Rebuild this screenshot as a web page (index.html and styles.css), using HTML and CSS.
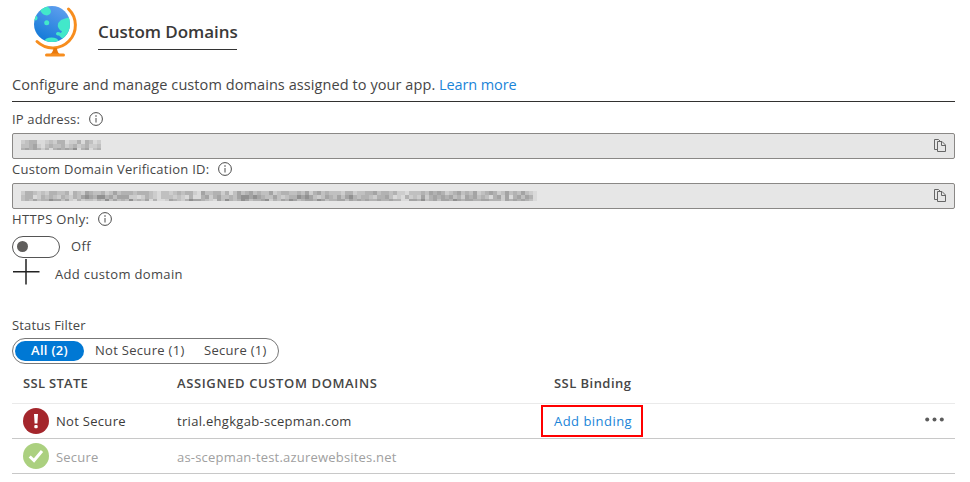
FILE: index.html
```
<!DOCTYPE html>
<html lang="en">
<head>
<meta charset="utf-8">
<title>Custom Domains</title>
<link rel="stylesheet" href="styles.css">
</head>
<body>
<svg class="defs" width="0" height="0">
  <symbol id="info" viewBox="0 0 14 14"><circle cx="7" cy="7" r="6.4" fill="none" stroke="#4a4a4a"/><path d="M7 6v4.5" stroke="#4a4a4a"/><circle cx="7" cy="4" r=".8" fill="#4a4a4a"/></symbol>
  <symbol id="copy" viewBox="0 0 12 14"><path d="M3.5 10.500h-3V.5h4l2 2" fill="none" stroke="#666"/><path d="M3.500 2.500h4.500l3.500 3.500v6.500h-8zM7.500 2.500v4h4" fill="none" stroke="#666"/></symbol>
</svg>
<main class="page">
  <header class="header">
    <svg class="globe" viewBox="0 0 44 54" width="44" height="54">
      <defs>
        <linearGradient id="sea" x1="0.7" y1="0" x2="0.2" y2="1"><stop offset="0" stop-color="#5e9eee"/><stop offset="1" stop-color="#0f78d7"/></linearGradient>
        <clipPath id="disc"><circle cx="18" cy="19" r="18"/></clipPath>
      </defs>
      <circle cx="18" cy="19" r="18" fill="url(#sea)"/>
      <g clip-path="url(#disc)" fill="#42e8ca">
        <path d="M6 5Q8 10 13 10.500Q17 9.500 17 6Q16 3 12 0Z"/>
        <circle cx="12.700" cy="17.700" r="2.500"/>
        <circle cx="1" cy="13" r="2.500"/>
        <path d="M37 12Q31 13 27 15Q23 18 24 22Q26 26 28 26L27 28Q23 26 22 28.500Q22 30.500 25 30.500Q27 33 30 34L38 24Z"/>
        <ellipse cx="17.500" cy="36" rx="7" ry="3.500"/>
      </g>
      <path d="M34.500 4A21 21 0 0 1 3 36.500" fill="none" stroke="#f78d1e" stroke-width="3" stroke-linecap="round"/>
      <path d="M19.500 43h3.500q0 5 4 7h-12q4-2 4.500-7z" fill="#e8780c"/>
      <rect x="11" y="48.500" width="20" height="3" rx="1.500" fill="#f78d1e"/>
    </svg>
    <h1 class="title">Custom Domains</h1>
  </header>
  <p class="intro"><span class="intro-text">Configure and manage custom domains assigned to your app.</span> <a class="link learn">Learn more</a></p>
  <div class="label"><span class="t-ip">IP address:</span><svg width="14" height="14"><use href="#info"/></svg></div>
  <div class="field ip-field"><svg class="mosaic" id="ip" width="80" height="10"></svg><svg class="copy" width="12" height="14"><use href="#copy"/></svg></div>
  <div class="label"><span class="t-id">Custom Domain Verification ID:</span><svg width="14" height="14"><use href="#info"/></svg></div>
  <div class="field"><svg class="mosaic" id="vid" width="516" height="10"></svg><svg class="copy" width="12" height="14"><use href="#copy"/></svg></div>
  <div class="label"><span class="t-https">HTTPS Only:</span><svg width="14" height="14"><use href="#info"/></svg></div>
  <div class="switch-row"><span class="switch"><i></i></span><span class="t-off">Off</span></div>
  <div class="add-row"><svg width="28" height="26" viewBox="0 0 28 26"><path d="M14 0v25.500M1 12.700h26.500" stroke="#222" stroke-width="1.500"/></svg><span class="t-add">Add custom domain</span></div>
  <div class="filter-label"><span class="t-filter">Status Filter</span></div>
  <div class="pills"><span class="pill on">All (2)</span><span class="pill p2">Not Secure (1)</span><span class="pill p3">Secure (1)</span></div>
  <div class="row head"><span class="t-h1">SSL STATE</span><span class="t-h2">ASSIGNED CUSTOM DOMAINS</span><span class="t-h3">SSL Binding</span></div>
  <div class="row bad">
    <div class="state"><svg width="26" height="26" viewBox="0 0 26 26"><circle cx="13" cy="13" r="13" fill="#a4262c"/><path d="M11 6h4l-.6 9.500h-2.800z" fill="#fff"/><rect x="11.300" y="17" width="3.400" height="3.200" rx="1" fill="#fff"/></svg><span class="t-ns">Not Secure</span></div>
    <span class="t-d1">trial.ehgkgab-scepman.com</span>
    <a class="link binding">Add binding</a>
    <svg class="more" width="19" height="5" viewBox="0 0 19 5"><g fill="#5c5c5c"><circle cx="2.200" cy="2.500" r="2"/><circle cx="9.500" cy="2.500" r="2"/><circle cx="16.800" cy="2.500" r="2"/></g></svg>
  </div>
  <div class="row good">
    <div class="state"><svg width="26" height="26" viewBox="0 0 26 26"><circle cx="13" cy="13" r="13" fill="#abd07f"/><path d="M6.700 13.500l4.300 4 8-9.500" fill="none" stroke="#fff" stroke-width="3"/></svg><span class="t-sec">Secure</span></div>
    <span class="t-d2">as-scepman-test.azurewebsites.net</span>
  </div>
</main>
<script src="mosaic.js"></script>
</body>
</html>
```
FILE: styles.css
```
* { box-sizing: border-box; }
body { margin: 0; background: #fff; color: #464646; font: 13px/20px "Open Sans", "Noto Sans", sans-serif; }
.defs { position: absolute; }
.page { width: 970px; height: 482px; padding: 0 15px 0 12px; overflow: hidden; }
.page span, .page a, h1 { white-space: nowrap; }
.header { display: flex; height: 62px; padding: 5px 0 0 22px; }
.globe { flex: none; }
.title { margin: 13px 0 0 20px; height: 32px; font-size: 17px; line-height: 28px; font-weight: 600; border-bottom: 1px solid #333; width: 139px; color: #3a3938; letter-spacing: -.04px; }
.intro { margin: 0; height: 40px; padding-top: 13px; line-height: 20px; font-size: 14.500px; border-bottom: 1px solid #323130; }
.intro-text { letter-spacing: .08px; }
.learn { letter-spacing: -.12px; }
.link { color: #1a84d8; text-decoration: none; }
.label { display: flex; align-items: center; gap: 9px; height: 31px; padding-top: 3px; }
.field + .label { height: 24px; padding-bottom: 4px; padding-top: 0; }
.label svg { flex: none; }
.t-ip { letter-spacing: .15px; }
.t-id { letter-spacing: .26px; }
.t-https { letter-spacing: .35px; }
.field { display: flex; justify-content: space-between; align-items: center; height: 26px; border: 1px solid #8a8886; border-radius: 2px; background: #e6e6e6; padding: 0 8px; }
.ip-field .mosaic { margin-bottom: 2px; }
.switch-row { display: flex; align-items: center; height: 24px; margin-top: 2px; gap: 11px; }
.switch { width: 48px; height: 22px; border: 1px solid #555; border-radius: 11px; padding: 4px; }
.switch i { display: block; width: 11px; height: 11px; border-radius: 50%; background: #605e5c; }
.t-off { letter-spacing: .4px; margin-bottom: 2px; }
.add-row { display: flex; align-items: center; height: 26px; gap: 15px; }
.t-add { letter-spacing: .34px; padding-top: 4px; }
.filter-label { height: 53px; padding-top: 30px; letter-spacing: .15px; }
.pills { display: flex; width: 267px; height: 26px; border: 1px solid #777; border-radius: 13px; padding: 2px; line-height: 19px; letter-spacing: .3px; }
.pill { height: 20px; }
.on { width: 69px; border-radius: 10px; background: #0078d4; color: #fff; font-weight: 600; text-align: center; }
.p2 { margin-left: 11px; width: 109px; }
.row { display: grid; grid-template-columns: 154px 377px 1fr auto; align-items: center; padding: 0 11px; border-bottom: 1px solid #c8c8c8; height: 35px; letter-spacing: .3px; }
.head { height: 40px; font-weight: 600; border-color: #eaeaea; padding-bottom: 2px; }
.t-h2 { letter-spacing: .62px; }
.t-h3 { letter-spacing: .45px; }
.state { display: flex; align-items: center; gap: 7px; }
.bad { color: #3c3b3a; }
.good { color: #a0a0a0; letter-spacing: .2px; }
.good span { padding-top: 2px; }
.more { margin-bottom: 4px; }
.binding { justify-self: start; width: 102px; height: 32px; margin-left: -13px; padding: 4px 11px; border: 2px solid #f00; letter-spacing: .47px; }
```
FILE: mosaic.js
```
// Obscured values, drawn as 4px cells; each digit is an index into the shades.
const shades = ["#dadada", "#cdcdcd", "#c0c0c0", "#b2b2b2", "#a4a4a4", "#909090"];
const values = {
  ip: [
    "12330012133011303201",
    "22341023223123123112",
    "34343130343435034023"
  ],
  vid: [
    "133212133223032143223124233323332102212323310422331302423423224123322324134232221331223342332311022232434312342324123431242324210",
    "233013232132132454355342444110132102221210300341342232455454322421233545421243242453233213342010312141343434231434232034140342430",
    "232423354424103122132524232523240300143213544321042532354233451324354234435423344243434334334330044352342443543443344333143434320"
  ]
};
for (const [id, lines] of Object.entries(values)) {
  const svg = document.getElementById(id);
  lines.forEach((line, r) => {
    [...line].forEach((shade, c) => {
      const cell = document.createElementNS("http://www.w3.org/2000/svg", "rect");
      cell.setAttribute("x", c * 4);
      cell.setAttribute("y", r * 4);
      cell.setAttribute("width", 4);
      cell.setAttribute("height", r === 2 ? 2 : 4);
      cell.setAttribute("fill", shades[Number(shade)]);
      svg.append(cell);
    });
  });
}
```
